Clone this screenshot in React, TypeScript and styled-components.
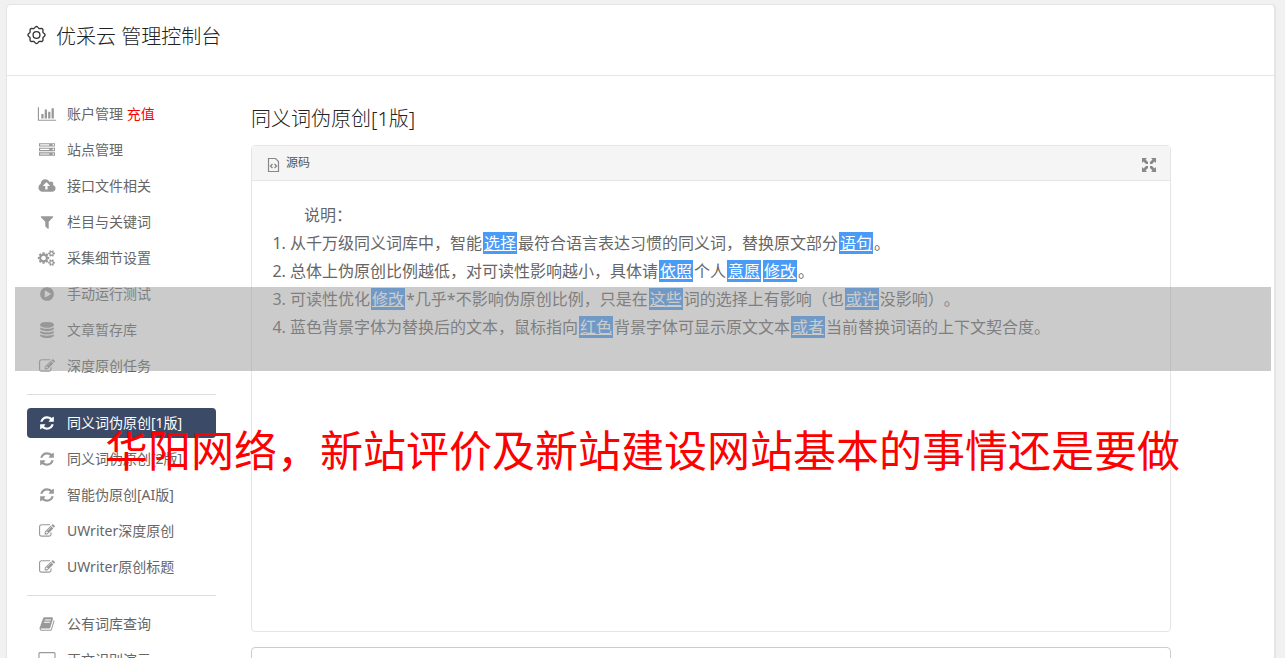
import React from 'react';
import styled, { createGlobalStyle, css } from 'styled-components';

const GlobalStyle = createGlobalStyle`
  *, *::before, *::after { box-sizing: border-box; }
  body {
    margin: 0;
    background: #f1f1f1;
    color: #666;
    font-family: "Noto Sans", "Noto Sans CJK SC", sans-serif;
    font-size: 14px;
    font-weight: 400;
    text-spacing-trim: space-all;
  }
`;

const Page = styled.div`
  position: relative;
  height: 100vh;
  overflow: hidden;
  padding: 4px 10px 0 6px;
`;

const Card = styled.div`
  min-height: 100vh;
  background: #fff;
  border: 1px solid #e5e5e5;
  border-radius: 4px;
  box-shadow: 1px 0 0 #e5e5e5;
`;

const Header = styled.header`
  display: flex;
  align-items: flex-start;
  gap: 10px;
  height: 71px;
  padding: 16px 20px;
  border-bottom: 1px solid #e5e5e5;
  color: #222;
`;

const HeaderTitle = styled.h1`
  margin: 0;
  font-size: 20px;
  font-weight: 300;
  line-height: 32px;
`;

const HeaderIcon = styled.svg`
  width: 19px;
  height: 28px;
  fill: none;
  stroke: #333;
  stroke-width: 1.4;
`;

const Columns = styled.div`
  display: flex;
  align-items: flex-start;
  gap: 35px;
  padding: 23px 103px 0 20px;
`;

const Sidebar = styled.nav`
  flex: 0 0 189px;
`;

const NavGroup = styled.ul`
  display: flex;
  flex-direction: column;
  gap: 6px;
  margin: 0;
  padding: 0;
  list-style: none;

  & + & {
    margin-top: 13px;
    padding-top: 13px;
    border-top: 1px solid #ddd;
  }
`;

const NavLink = styled.a<{ $active?: boolean }>`
  display: flex;
  align-items: center;
  gap: 10px;
  height: 30px;
  padding: 0 10px;
  border-radius: 4px;
  color: #666;
  line-height: 30px;
  white-space: nowrap;
  text-decoration: none;

  ${({ $active }) =>
    $active &&
    css`
      background: #3b4a66;
      color: #fff;
    `}
`;

const NavIcon = styled.svg<{ $active?: boolean }>`
  flex: none;
  width: 20px;
  height: 16px;
  fill: ${({ $active }) => ($active ? '#fff' : '#999')};
`;

const Accent = styled.span`
  color: #f00;
`;

const Main = styled.main`
  flex: 1;
  min-width: 0;
`;

const PageTitle = styled.h2`
  margin: 5px 0 12px;
  color: #222;
  font-size: 20px;
  font-weight: 300;
  line-height: 29px;
`;

const Editor = styled.section`
  border: 1px solid #e5e5e5;
  border-radius: 4px;
`;

const Toolbar = styled.div`
  display: flex;
  align-items: center;
  justify-content: space-between;
  height: 35px;
  padding: 0 13px 0 14px;
  background: #f5f5f5;
  border-bottom: 1px solid #e5e5e5;
`;

const ToolButton = styled.button`
  display: flex;
  align-items: center;
  gap: 6px;
  padding: 0;
  border: 0;
  background: none;
  color: #555;
  font: inherit;
  font-size: 12px;
  line-height: 20px;
`;

const ToolIcon = styled.svg`
  width: 14px;
  height: 16px;
  margin-top: 3px;
`;

const ExpandIcon = styled.svg`
  width: 16px;
  height: 16px;
  margin-top: 3px;
  fill: #888;
`;

const EditorBody = styled.div`
  min-height: 450px;
  padding: 20px;
  font-size: 16px;
  line-height: 28px;
`;

const Intro = styled.p`
  margin: 0;
  text-indent: 2em;
`;

const Notes = styled.ol`
  margin: 0;
  padding-left: 18px;
`;

const Swap = styled.mark`
  margin: 0 1px;
  padding: 0 1px;
  background: #4a9bf5;
  color: #fff;
  text-decoration: underline;
`;

const Output = styled.textarea`
  display: block;
  width: 100%;
  height: 120px;
  margin-top: 15px;
  border: 1px solid #ccc;
  border-radius: 4px;
  resize: none;
`;

const Band = styled.div`
  position: absolute;
  top: 287px;
  left: 15px;
  right: 14px;
  height: 84px;
  background: rgba(151, 151, 151, 0.5);
`;

const Caption = styled.p`
  position: absolute;
  top: 419px;
  left: 0;
  right: 0;
  margin: 0;
  color: #f00;
  font-size: 43px;
  font-weight: 400;
  line-height: 64px;
  text-align: center;
  white-space: nowrap;
`;

const cog =
  'q0-52-38-90t-90-38-90 38-38 90q0 53 37.5 90.5t90.5 37.5 90.5-37.5 37.5-90.5z';
const smallCog =
  'v140q0 16-149 31-12 27-30 52 51 113 51 138 0 4-4 7-122 71-124 71-8 0-46-47t-52-68q-20 2-30 2t-30-2q-14 21-52 68t-46 47q-2 0-124-71-4-3-4-7 0-25 51-138-18-25-30-52-149-15-149-31v-140q0-16 149-31 13-29 30-52-51-113-51-138 0-4 4-7 4-2 35-20t59-34 30-16q8 0 46 46.5t52 67.5q20-2 30-2t30 2q51-71 92-112l6-2q4 0 124 70 4 3 4 7 0 25-51 138 17 23 30 52 149 15 149 31z';

const icons = {
  chart: {
    w: 2048,
    d: 'M640 896v512h-256v-512h256zm384-512v1024h-256v-1024h256zm1024 1152v128h-2048v-1536h128v1408h1920zm-640-896v768h-256v-768h256zm384-384v1152h-256v-1152h256z',
  },
  server: {
    w: 1792,
    d: 'M128 1408h1024v-128h-1024v128zm0-512h1024v-128h-1024v128zm1568 448q0-40-28-68t-68-28-68 28-28 68 28 68 68 28 68-28 28-68zm-1568-960h1024v-128h-1024v128zm1568 448q0-40-28-68t-68-28-68 28-28 68 28 68 68 28 68-28 28-68zm0-512q0-40-28-68t-68-28-68 28-28 68 28 68 68 28 68-28 28-68zm96 832v384h-1792v-384h1792zm0-512v384h-1792v-384h1792zm0-512v384h-1792v-384h1792z',
  },
  cloud: {
    w: 1920,
    d: 'M1280 864q0-14-9-23l-352-352q-9-9-23-9t-23 9l-351 351q-10 12-10 24 0 14 9 23t23 9h224v352q0 13 9.5 22.5t22.5 9.5h192q13 0 22.5-9.5t9.5-22.5v-352h224q13 0 22.5-9.5t9.5-22.5zm640 288q0 159-112.5 271.5t-271.5 112.5h-1088q-185 0-316.5-131.5t-131.5-316.5q0-130 70-240t188-165q-2-30-2-43 0-212 150-362t362-150q156 0 285.5 87t188.5 231q71-62 166-62 106 0 181 75t75 181q0 76-41 138 130 31 213.5 135.5t83.5 238.5z',
  },
  filter: {
    w: 1792,
    d: 'M1595 295q17 41-14 70l-493 493v742q0 42-39 59-13 5-25 5-27 0-45-19l-256-256q-19-19-19-45v-486l-493-493q-31-29-14-70 17-39 59-39h1280q42 0 59 39z',
  },
  cogs: {
    w: 1920,
    d:
      'M832 896q0-106-75-181t-181-75-181 75-75 181 75 181 181 75 181-75 75-181z' +
      'M1600 1408' + cog +
      'M1600 384' + cog +
      'M1216 805v185q0 10-7 19.5t-16 10.5l-155 24q-11 35-32 76 34 48 90 115 7 11 7 20 0 12-7 19-23 30-82.5 89.5t-78.5 59.5q-11 0-21-7l-115-90q-37 19-77 31-11 108-23 155-7 24-30 24h-186q-11 0-20-7.5t-10-17.5l-23-153q-34-10-75-31l-118 89q-7 7-20 7-11 0-21-8-144-133-144-160 0-9 7-19 10-14 41-53t47-61q-23-44-35-82l-152-24q-10-1-17-9.5t-7-19.5v-185q0-10 7-19.5t16-10.5l155-24q11-35 32-76-34-48-90-115-7-11-7-20 0-12 7-20 22-30 82-89t79-59q11 0 21 7l115 90q34-18 77-32 11-108 23-154 7-24 30-24h186q11 0 20 7.5t10 17.5l23 153q34 10 75 31l118-89q8-7 20-7 11 0 21 8 144 133 144 160 0 8-7 19-12 16-42 54t-45 60q23 48 34 82l152 23q10 2 17 10.5t7 19.5z' +
      'M1856 1338' + smallCog +
      'M1856 314' + smallCog,
  },
  play: {
    w: 1792,
    d: 'M896 128q209 0 385.5 103t279.5 279.5 103 385.5-103 385.5-279.5 279.5-385.5 103-385.5-103-279.5-279.5-103-385.5 103-385.5 279.5-279.5 385.5-103zm384 823q32-18 32-55t-32-55l-544-320q-31-19-64-1-32 19-32 56v640q0 37 32 56 16 8 32 8 17 0 32-9z',
  },
  database: {
    w: 1792,
    d: 'M896 768q237 0 443-43t325-127v170q0 69-103 128t-280 93.5-385 34.5-385-34.5-280-93.5-103-128v-170q119 84 325 127t443 43zm0 768q237 0 443-43t325-127v170q0 69-103 128t-280 93.5-385 34.5-385-34.5-280-93.5-103-128v-170q119 84 325 127t443 43zm0-384q237 0 443-43t325-127v170q0 69-103 128t-280 93.5-385 34.5-385-34.5-280-93.5-103-128v-170q119 84 325 127t443 43zm0-1152q208 0 385 34.5t280 93.5 103 128v128q0 69-103 128t-280 93.5-385 34.5-385-34.5-280-93.5-103-128v-128q0-69 103-128t280-93.5 385-34.5z',
  },
  edit: {
    w: 1792,
    d: 'M888 1184l116-116-152-152-116 116v56h96v96h56zm440-720q-16-16-33 1l-350 350q-17 17-1 33t33-1l350-350q17-17 1-33zm80 594v190q0 119-84.5 203.5t-203.5 84.5h-832q-119 0-203.5-84.5t-84.5-203.5v-832q0-119 84.5-203.5t203.5-84.5h832q63 0 117 25 15 7 18 23 3 17-9 29l-49 49q-14 14-32 8-23-6-45-6h-832q-66 0-113 47t-47 113v832q0 66 47 113t113 47h832q66 0 113-47t47-113v-126q0-13 9-22l64-64q15-15 35-7t20 29zm-96-738l288 288-672 672h-288v-288zm444 132l-92 92-288-288 92-92q28-28 68-28t68 28l152 152q28 28 28 68t-28 68z',
  },
  refresh: {
    w: 1792,
    d: 'M1639 1056q0 5-1 7-64 268-268 434.5t-478 166.5q-146 0-282.5-55t-243.5-157l-129 129q-19 19-45 19t-45-19-19-45v-448q0-26 19-45t45-19h448q26 0 45 19t19 45-19 45l-137 137q71 66 161 102t187 36q134 0 250-65t186-179q11-17 53-117 8-23 30-23h192q13 0 22.5 9.5t9.5 22.5zm25-800v448q0 26-19 45t-45 19h-448q-26 0-45-19t-19-45 19-45l138-138q-148-137-349-137-134 0-250 65t-186 179q-11 17-53 117-8 23-30 23h-199q-13 0-22.5-9.5t-9.5-22.5v-7q65-268 270-434.5t480-166.5q146 0 284 55.5t245 156.5l130-129q19-19 45-19t45 19 19 45z',
  },
  book: {
    w: 1792,
    d: 'M1703 478q40 57 18 129l-275 906q-19 64-76.5 107.5t-122.5 43.5h-923q-77 0-148.5-53.5t-99.5-131.5q-24-67-2-127 0-4 3-27t4-37q1-8-3-21.5t-3-19.5q2-11 8-21t16.5-23.5 16.5-23.5q23-38 45-91.5t30-91.5q3-10 .5-30t-.5-28q3-11 17-28t17-23q21-36 42-92t25-90q1-9-2.5-32t.5-28q4-13 22-30.5t22-22.5q19-26 42.5-84.5t27.5-96.5q1-8-3-25.5t-2-26.5q2-8 9-18t18-23 17-21q8-12 16.5-30.5t15-35 16-36 19.5-32 26.5-23.5 36-11.5 47.5 5.5l-1 3q38-9 51-9h761q74 0 114 56t18 130l-274 906q-36 119-71.5 153.5t-128.5 34.5h-869q-27 0-38 15-11 16-1 43 24 70 144 70h923q29 0 56-15.5t35-41.5l300-987q7-22 5-57 38 15 59 43zm-1064 2q-4 13 2 22.5t20 9.5h608q13 0 25.5-9.5t16.5-22.5l21-64q4-13-2-22.5t-20-9.5h-608q-13 0-25.5 9.5t-16.5 22.5zm-83 256q-4 13 2 22.5t20 9.5h608q13 0 25.5-9.5t16.5-22.5l21-64q4-13-2-22.5t-20-9.5h-608q-13 0-25.5 9.5t-16.5 22.5z',
  },
  screen: {
    w: 1920,
    d: 'M160 0h1600q66 0 113 47t47 113v1088q0 66-47 113t-113 47h-544v256h-512v-256h-544q-66 0-113-47t-47-113v-1088q0-66 47-113t113-47zM128 160v960h1664v-960q0-32-32-32h-1600q-32 0-32 32z',
  },
};

type IconName = keyof typeof icons;

interface Entry {
  icon: IconName;
  label: string;
  accent?: string;
  active?: boolean;
}

const groups: Entry[][] = [
  [
    { icon: 'chart', label: '账户管理', accent: '充值' },
    { icon: 'server', label: '站点管理' },
    { icon: 'cloud', label: '接口文件相关' },
    { icon: 'filter', label: '栏目与关键词' },
    { icon: 'cogs', label: '采集细节设置' },
    { icon: 'play', label: '手动运行测试' },
    { icon: 'database', label: '文章暂存库' },
    { icon: 'edit', label: '深度原创任务' },
  ],
  [
    { icon: 'refresh', label: '同义词伪原创[1版]', active: true },
    { icon: 'refresh', label: '同义词伪原创[2版]' },
    { icon: 'refresh', label: '智能伪原创[AI版]' },
    { icon: 'edit', label: 'UWriter深度原创' },
    { icon: 'edit', label: 'UWriter原创标题' },
  ],
  [
    { icon: 'book', label: '公有词库查询' },
    { icon: 'screen', label: '正文识别演示' },
  ],
];

// Outline of the header gear: a circle whose radius swells into eight teeth.
const gearOutline = (() => {
  const steps = 96;
  const points: string[] = [];
  for (let i = 0; i < steps; i += 1) {
    const a = (i / steps) * 2 * Math.PI;
    const r = 8.2 + 0.8 * Math.cos(8 * a);
    points.push(`${(10 + r * Math.cos(a)).toFixed(2)} ${(10 + r * Math.sin(a)).toFixed(2)}`);
  }
  return `M${points.join('L')}Z`;
})();

export default function App() {
  return (
    <>
      <GlobalStyle />
      <Page>
        <Card>
          <Header>
            <HeaderIcon viewBox="0 0 20 20" aria-hidden="true">
              <path d={gearOutline} />
              <circle cx="10" cy="10" r="3.6" />
            </HeaderIcon>
            <HeaderTitle>优采云 管理控制台</HeaderTitle>
          </Header>
          <Columns>
            <Sidebar>
              {groups.map((group, index) => (
                <NavGroup key={index}>
                  {group.map(({ icon, label, accent, active }) => (
                    <li key={label}>
                      <NavLink href="#" $active={active}>
                        <NavIcon
                          $active={active}
                          viewBox={`0 0 ${icons[icon].w} 1792`}
                          aria-hidden="true"
                        >
                          <path fillRule="evenodd" d={icons[icon].d} />
                        </NavIcon>
                        <span>
                          {label}
                          {accent && <Accent> {accent}</Accent>}
                        </span>
                      </NavLink>
                    </li>
                  ))}
                </NavGroup>
              ))}
            </Sidebar>
            <Main>
              <PageTitle>同义词伪原创[1版]</PageTitle>
              <Editor>
                <Toolbar>
                  <ToolButton type="button">
                    <ToolIcon viewBox="0 0 14 16" fill="none" stroke="#888" aria-hidden="true">
                      <path d="M2.5 1.5h7l3 3v10h-10z" strokeWidth="1.2" />
                      <path d="M6.5 7L4.5 9l2 2M8.5 7l2 2-2 2" strokeWidth="1.4" />
                    </ToolIcon>
                    源码
                  </ToolButton>
                  <ToolButton type="button" aria-label="全屏">
                    <ExpandIcon viewBox="0 0 16 16" aria-hidden="true">
                      <path d="M1 1h5L4.5 2.5 7 5v2H5L2.500 4.500 1 6zM15 1h-5l1.500 1.500L9 5v2h2l2.500-2.500L15 6zM1 15h5l-1.500-1.500L7 11V9H5l-2.500 2.500L1 10zM15 15h-5l1.500-1.500L9 11V9h2l2.500 2.500L15 10z" />
                    </ExpandIcon>
                  </ToolButton>
                </Toolbar>
                <EditorBody>
                  <Intro>说明：</Intro>
                  <Notes>
                    <li>
                      从千万级同义词库中，智能<Swap>选择</Swap>最符合语言表达习惯的同义词，替换原文部分<Swap>语句</Swap>。
                    </li>
                    <li>
                      总体上伪原创比例越低，对可读性影响越小，具体请<Swap>依照</Swap>个人<Swap>意愿</Swap><Swap>修改</Swap>。
                    </li>
                    <li>
                      可读性优化<Swap>修改</Swap>*几乎*不影响伪原创比例，只是在<Swap>这些</Swap>词的选择上有影响（也<Swap>或许</Swap>没影响）。
                    </li>
                    <li>
                      蓝色背景字体为替换后的文本，鼠标指向<Swap>红色</Swap>背景字体可显示原文文本<Swap>或者</Swap>当前替换词语的上下文契合度。
                    </li>
                  </Notes>
                </EditorBody>
              </Editor>
              <Output aria-label="输出内容" />
            </Main>
          </Columns>
        </Card>
        <Band />
        <Caption>华阳网络，新站评价及新站建设网站基本的事情还是要做</Caption>
      </Page>
    </>
  );
}
